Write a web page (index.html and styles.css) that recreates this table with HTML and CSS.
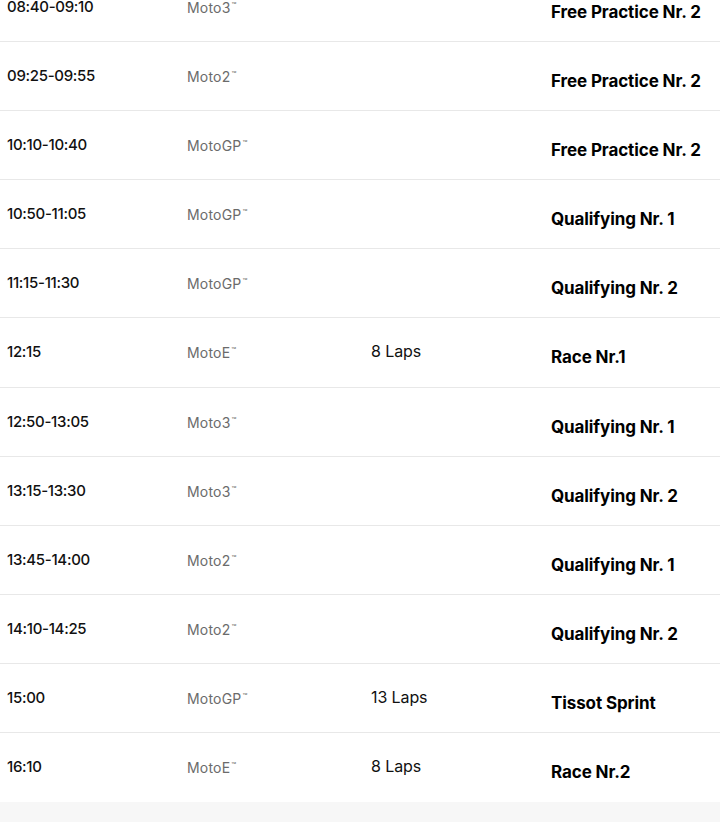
FILE: index.html
```html
<!DOCTYPE html>
<html>
<head>
<meta charset="utf-8">
<link rel="stylesheet" href="styles.css">
</head>
<body>
<div class="schedule">
  <div class="row"><div class="time">08:40-09:10</div><div class="cat">Moto3<span class="tm">™</span></div><div class="laps"></div><div class="title">Free Practice Nr. 2</div></div>
  <div class="row"><div class="time">09:25-09:55</div><div class="cat">Moto2<span class="tm">™</span></div><div class="laps"></div><div class="title">Free Practice Nr. 2</div></div>
  <div class="row"><div class="time">10:10-10:40</div><div class="cat">MotoGP<span class="tm">™</span></div><div class="laps"></div><div class="title">Free Practice Nr. 2</div></div>
  <div class="row"><div class="time">10:50-11:05</div><div class="cat">MotoGP<span class="tm">™</span></div><div class="laps"></div><div class="title">Qualifying Nr. 1</div></div>
  <div class="row"><div class="time">11:15-11:30</div><div class="cat">MotoGP<span class="tm">™</span></div><div class="laps"></div><div class="title">Qualifying Nr. 2</div></div>
  <div class="row"><div class="time">12:15</div><div class="cat">MotoE<span class="tm">™</span></div><div class="laps">8 Laps</div><div class="title">Race Nr.1</div></div>
  <div class="row"><div class="time">12:50-13:05</div><div class="cat">Moto3<span class="tm">™</span></div><div class="laps"></div><div class="title">Qualifying Nr. 1</div></div>
  <div class="row"><div class="time">13:15-13:30</div><div class="cat">Moto3<span class="tm">™</span></div><div class="laps"></div><div class="title">Qualifying Nr. 2</div></div>
  <div class="row"><div class="time">13:45-14:00</div><div class="cat">Moto2<span class="tm">™</span></div><div class="laps"></div><div class="title">Qualifying Nr. 1</div></div>
  <div class="row"><div class="time">14:10-14:25</div><div class="cat">Moto2<span class="tm">™</span></div><div class="laps"></div><div class="title">Qualifying Nr. 2</div></div>
  <div class="row"><div class="time">15:00</div><div class="cat">MotoGP<span class="tm">™</span></div><div class="laps">13 Laps</div><div class="title">Tissot Sprint</div></div>
  <div class="row last"><div class="time">16:10</div><div class="cat">MotoE<span class="tm">™</span></div><div class="laps">8 Laps</div><div class="title">Race Nr.2</div></div>
</div>
<div class="footer"></div>
</body>
</html>
```
FILE: styles.css
```css
html, body {
  margin: 0;
  padding: 0;
  background: #fff;
}
body {
  font-family: "Inter", "Noto Sans", sans-serif;
  color: #000;
  overflow: hidden;
}
.schedule {
  margin-top: -27px;
}
.row {
  display: grid;
  grid-template-columns: 180px 180px 180px 180px;
  height: 68.1px;
  border-bottom: 1px solid #e8e8e8;
}
.row.last {
  border-bottom: none;
  height: 69px;
}
.time {
  padding: 25px 0 0 7px;
  font-size: 15px;
  font-weight: 500;
  letter-spacing: -0.3px;
  color: #111;
  line-height: 18px;
}
.cat {
  padding: 24px 0 0 7px;
  font-size: 14px;
  color: #6b6b6b;
  line-height: 17px;
  letter-spacing: 0.2px;
}
.tm {
  font-size: 8px;
  vertical-align: 5px;
  margin-left: 1px;
}
.laps {
  padding: 23px 0 0 11px;
  font-size: 16px;
  color: #111;
  line-height: 20px;
  letter-spacing: -0.1px;
}
.title {
  padding: 29px 0 0 11px;
  font-size: 17px;
  font-weight: 700;
  line-height: 20px;
  letter-spacing: -0.1px;
}
.footer {
  height: 40px;
  background: #f7f7f7;
}
```
